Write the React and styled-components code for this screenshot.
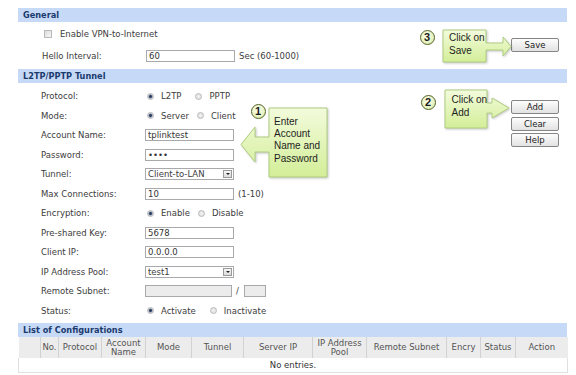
import React from "react";
import styled, { createGlobalStyle } from "styled-components";

const Global = createGlobalStyle`
  html, body { margin: 0; padding: 0; background: #fff; }
  body {
    font-family: "DejaVu Sans", Verdana, sans-serif;
    font-size: 8.5px;
    color: #3c3c3c;
  }
`;

const Page = styled.div`
  position: relative;
  width: 576px;
  height: 375px;
  overflow: hidden;
  box-sizing: border-box;
  padding: 8px 9px 0 18px;
  background: #fff;
`;

const SectionHeader = styled.div`
  height: 14px;
  line-height: 14px;
  background: #c6daf7;
  color: #1b3a6e;
  font-weight: bold;
  font-size: 8.2px;
  padding-left: 5px;
`;

const SectionBody = styled.div`
  display: flex;
  justify-content: space-between;
  align-items: flex-start;
  height: ${(p) => p.$h}px;
`;

const Form = styled.div`
  display: flex;
  flex-direction: column;
  padding-top: ${(p) => p.$pt}px;
`;

const Row = styled.div`
  display: flex;
  align-items: center;
  height: ${(p) => p.$h}px;
  padding-left: ${(p) => p.$indent}px;
  white-space: nowrap;
`;

const Label = styled.span`
  width: 104px;
  flex: none;
`;

const Checkbox = styled.span`
  width: 8px;
  height: 8px;
  box-sizing: border-box;
  border: 1px solid #b8b8b8;
  background: linear-gradient(135deg, #dcdcdc, #f7f7f7);
  margin-right: 8px;
`;

const Input = styled.input`
  width: ${(p) => p.$w || 89}px;
  height: 12px;
  box-sizing: border-box;
  border: 1px solid #a9a9ad;
  background: ${(p) => (p.disabled ? "#ececec" : "#fff")};
  font-family: "DejaVu Sans", Verdana, sans-serif;
  font-size: 8.5px;
  color: #333;
  padding: 0 2px;
  margin: 0;
  outline: none;
`;

const Hint = styled.span`
  margin-left: 4px;
`;

const Slash = styled.span`
  margin: 0 5px 0 4px;
`;

const SelectBox = styled.div`
  width: 89px;
  height: 12px;
  box-sizing: border-box;
  border: 1px solid #a9a9ad;
  background: #fff;
  display: flex;
  align-items: center;
  justify-content: space-between;
  padding-left: 2px;
`;

const SelectBtn = styled.span`
  width: 9px;
  height: 8px;
  box-sizing: border-box;
  border: 1px solid #9a9a9a;
  background: linear-gradient(#f6f6f6, #dcdcdc);
  margin-right: 1px;
  display: flex;
  align-items: center;
  justify-content: center;
  &::after {
    content: "";
    border-left: 2px solid transparent;
    border-right: 2px solid transparent;
    border-top: 2px solid #222;
  }
`;

const RadioOpt = styled.span`
  display: inline-flex;
  align-items: center;
  margin-right: ${(p) => p.$gap ?? 9}px;
`;

const Radio = styled.span`
  width: 7px;
  height: 7px;
  box-sizing: border-box;
  border-radius: 50%;
  border: 1px solid #b9b9b9;
  margin: 0 7px 0 2px;
  background: ${(p) =>
    p.$on
      ? "radial-gradient(circle, #2c3f5e 0 1.1px, #7f8ea5 1.6px, #e4e8ee 2.6px)"
      : "radial-gradient(circle, #f4f4f4 0, #d9d9d9 100%)"};
`;

const ButtonCol = styled.div`
  display: flex;
  flex-direction: column;
  gap: 2.7px;
  width: 48px;
  margin-right: 8px;
  padding-top: ${(p) => p.$pt}px;
`;

const Button = styled.button`
  width: 48px;
  height: 14px;
  box-sizing: border-box;
  border: 1px solid #858585;
  border-radius: 2px;
  background: linear-gradient(#fdfdfd, #e2e2e2);
  font-family: "DejaVu Sans", Verdana, sans-serif;
  font-size: 8.5px;
  color: #222;
  padding: 0;
  line-height: 12px;
`;

const Table = styled.table`
  width: 549px;
  border-collapse: collapse;
  table-layout: fixed;
`;

const Th = styled.th`
  height: 21px;
  background: #ececec;
  font-weight: normal;
  color: #555;
  border-right: 1px solid #d2d2d2;
  padding: 0;
  line-height: 9px;
  text-align: center;
  vertical-align: middle;
  &:last-child { border-right: none; }
`;

const Td = styled.td`
  height: 14px;
  border: 1px solid #e0e0e0;
  border-top: none;
  text-align: center;
  color: #333;
  padding: 0;
`;

/* ---------- annotation overlays ---------- */

const Callout = styled.div`
  position: absolute;
  left: ${(p) => p.$x}px;
  top: ${(p) => p.$y}px;
  width: ${(p) => p.$w}px;
  height: ${(p) => p.$h}px;
`;

const CalloutSvg = styled.svg`
  position: absolute;
  inset: 0;
  overflow: visible;
  filter: drop-shadow(1px 1px 1px rgba(0, 0, 0, 0.22));
`;

const CalloutText = styled.div`
  position: absolute;
  left: ${(p) => p.$tx}px;
  top: ${(p) => p.$ty}px;
  font-family: "Liberation Sans", Arial, sans-serif;
  font-size: 10px;
  line-height: ${(p) => p.$lh}px;
  color: #1e1e1e;
  white-space: nowrap;
`;

const Badge = styled.div`
  position: absolute;
  left: ${(p) => p.$x}px;
  top: ${(p) => p.$y}px;
  width: 15px;
  height: 15px;
  box-sizing: border-box;
  border-radius: 50%;
  border: 1.5px solid #56622a;
  background: radial-gradient(circle at 45% 40%, #fbfdf0 0, #e6f3c2 60%, #c9e28e 100%);
  display: flex;
  align-items: center;
  justify-content: center;
  font-family: "Liberation Sans", Arial, sans-serif;
  font-weight: bold;
  font-size: 11px;
  color: #1a1a1a;
`;

function CalloutShape({ x, y, w, h, d, tx, ty, lh, lines, id }) {
  return (
    <Callout $x={x} $y={y} $w={w} $h={h}>
      <CalloutSvg width={w} height={h} viewBox={`0 0 ${w} ${h}`}>
        <defs>
          <linearGradient id={id} x1="0" y1="0" x2="0" y2="1">
            <stop offset="0" stopColor="#f3fbdc" />
            <stop offset="1" stopColor="#d3ee98" />
          </linearGradient>
        </defs>
        <path d={d} fill={`url(#${id})`} stroke="#aecd80" strokeWidth="1" />
      </CalloutSvg>
      <CalloutText $tx={tx} $ty={ty} $lh={lh}>
        {lines.map((l) => (
          <div key={l}>{l}</div>
        ))}
      </CalloutText>
    </Callout>
  );
}

const cols = [22, 18, 43, 44, 46, 52, 69, 54, 80, 34, 35, 52];
const heads = [
  "",
  "No.",
  "Protocol",
  ["Account", "Name"],
  "Mode",
  "Tunnel",
  "Server IP",
  ["IP Address", "Pool"],
  "Remote Subnet",
  "Encry",
  "Status",
  "Action",
];

function Opt({ on, children, gap }) {
  return (
    <RadioOpt $gap={gap}>
      <Radio $on={on} />
      {children}
    </RadioOpt>
  );
}

function Select({ value }) {
  return (
    <SelectBox>
      <span>{value}</span>
      <SelectBtn />
    </SelectBox>
  );
}

export default function App() {
  const RH = 19.5;
  return (
    <>
      <Global />
      <Page>
        <SectionHeader>General</SectionHeader>
        <SectionBody $h={47}>
          <Form $pt={1}>
            <Row $h={22} $indent={26}>
              <Checkbox />
              Enable VPN-to-Internet
            </Row>
            <Row $h={22} $indent={24}>
              <Label>Hello Interval:</Label>
              <Input defaultValue="60" />
              <Hint>Sec (60-1000)</Hint>
            </Row>
          </Form>
          <ButtonCol $pt={16}>
            <Button>Save</Button>
          </ButtonCol>
        </SectionBody>

        <SectionHeader>L2TP/PPTP Tunnel</SectionHeader>
        <SectionBody $h={240}>
          <Form $pt={3.25}>
            <Row $h={RH} $indent={23}>
              <Label>Protocol:</Label>
              <Opt on gap={12}>L2TP</Opt>
              <Opt>PPTP</Opt>
            </Row>
            <Row $h={RH} $indent={23}>
              <Label>Mode:</Label>
              <Opt on gap={6}>Server</Opt>
              <Opt>Client</Opt>
            </Row>
            <Row $h={RH} $indent={23}>
              <Label>Account Name:</Label>
              <Input defaultValue="tplinktest" />
            </Row>
            <Row $h={RH} $indent={23}>
              <Label>Password:</Label>
              <Input type="password" defaultValue="1234" />
            </Row>
            <Row $h={RH} $indent={23}>
              <Label>Tunnel:</Label>
              <Select value="Client-to-LAN" />
            </Row>
            <Row $h={RH} $indent={23}>
              <Label>Max Connections:</Label>
              <Input defaultValue="10" />
              <Hint>(1-10)</Hint>
            </Row>
            <Row $h={RH} $indent={23}>
              <Label>Encryption:</Label>
              <Opt on gap={6}>Enable</Opt>
              <Opt>Disable</Opt>
            </Row>
            <Row $h={RH} $indent={23}>
              <Label>Pre-shared Key:</Label>
              <Input defaultValue="5678" />
            </Row>
            <Row $h={RH} $indent={23}>
              <Label>Client IP:</Label>
              <Input defaultValue="0.0.0.0" />
            </Row>
            <Row $h={RH} $indent={23}>
              <Label>IP Address Pool:</Label>
              <Select value="test1" />
            </Row>
            <Row $h={RH} $indent={23}>
              <Label>Remote Subnet:</Label>
              <Input disabled $w={87} />
              <Slash>/</Slash>
              <Input disabled $w={22} />
            </Row>
            <Row $h={RH} $indent={23}>
              <Label>Status:</Label>
              <Opt on gap={12}>Activate</Opt>
              <Opt>Inactivate</Opt>
            </Row>
          </Form>
          <ButtonCol $pt={17}>
            <Button>Add</Button>
            <Button>Clear</Button>
            <Button>Help</Button>
          </ButtonCol>
        </SectionBody>

        <SectionHeader>List of Configurations</SectionHeader>
        <Table>
          <colgroup>
            {cols.map((w, i) => (
              <col key={i} style={{ width: w }} />
            ))}
          </colgroup>
          <thead>
            <tr>
              {heads.map((h, i) => (
                <Th key={i}>
                  {Array.isArray(h) ? (
                    <>
                      {h[0]}
                      <br />
                      {h[1]}
                    </>
                  ) : (
                    h
                  )}
                </Th>
              ))}
            </tr>
          </thead>
          <tbody>
            <tr>
              <Td colSpan={12}>No entries.</Td>
            </tr>
          </tbody>
        </Table>

        {/* annotations */}
        <CalloutShape
          id="g1"
          x={240}
          y={105}
          w={92}
          h={76}
          d="M29,3 H87 V72 H29 V47 H15 V57 L1,39.5 L15,22 V32 H29 Z"
          tx={34}
          ty={10.5}
          lh={12.4}
          lines={["Enter", "Account", "Name and", "Password"]}
        />
        <CalloutShape
          id="g3"
          x={440}
          y={26}
          w={75}
          h={40}
          d="M3,4 H46 V17 H63 V11 L71,20.5 L63,30 V24 H46 V36 H3 Z"
          tx={9}
          ty={4.5}
          lh={13.4}
          lines={["Click on", "Save"]}
        />
        <CalloutShape
          id="g2"
          x={442}
          y={86}
          w={72}
          h={46}
          d="M3,4 H45 V17 H50 V12 L67,22 L50,32 V27 H45 V42 H3 Z"
          tx={9.5}
          ty={7}
          lh={13}
          lines={["Click on", "Add"]}
        />
        <Badge $x={250.5} $y={103.5}>1</Badge>
        <Badge $x={420.5} $y={94.5}>2</Badge>
        <Badge $x={419.5} $y={29.5}>3</Badge>
      </Page>
    </>
  );
}
